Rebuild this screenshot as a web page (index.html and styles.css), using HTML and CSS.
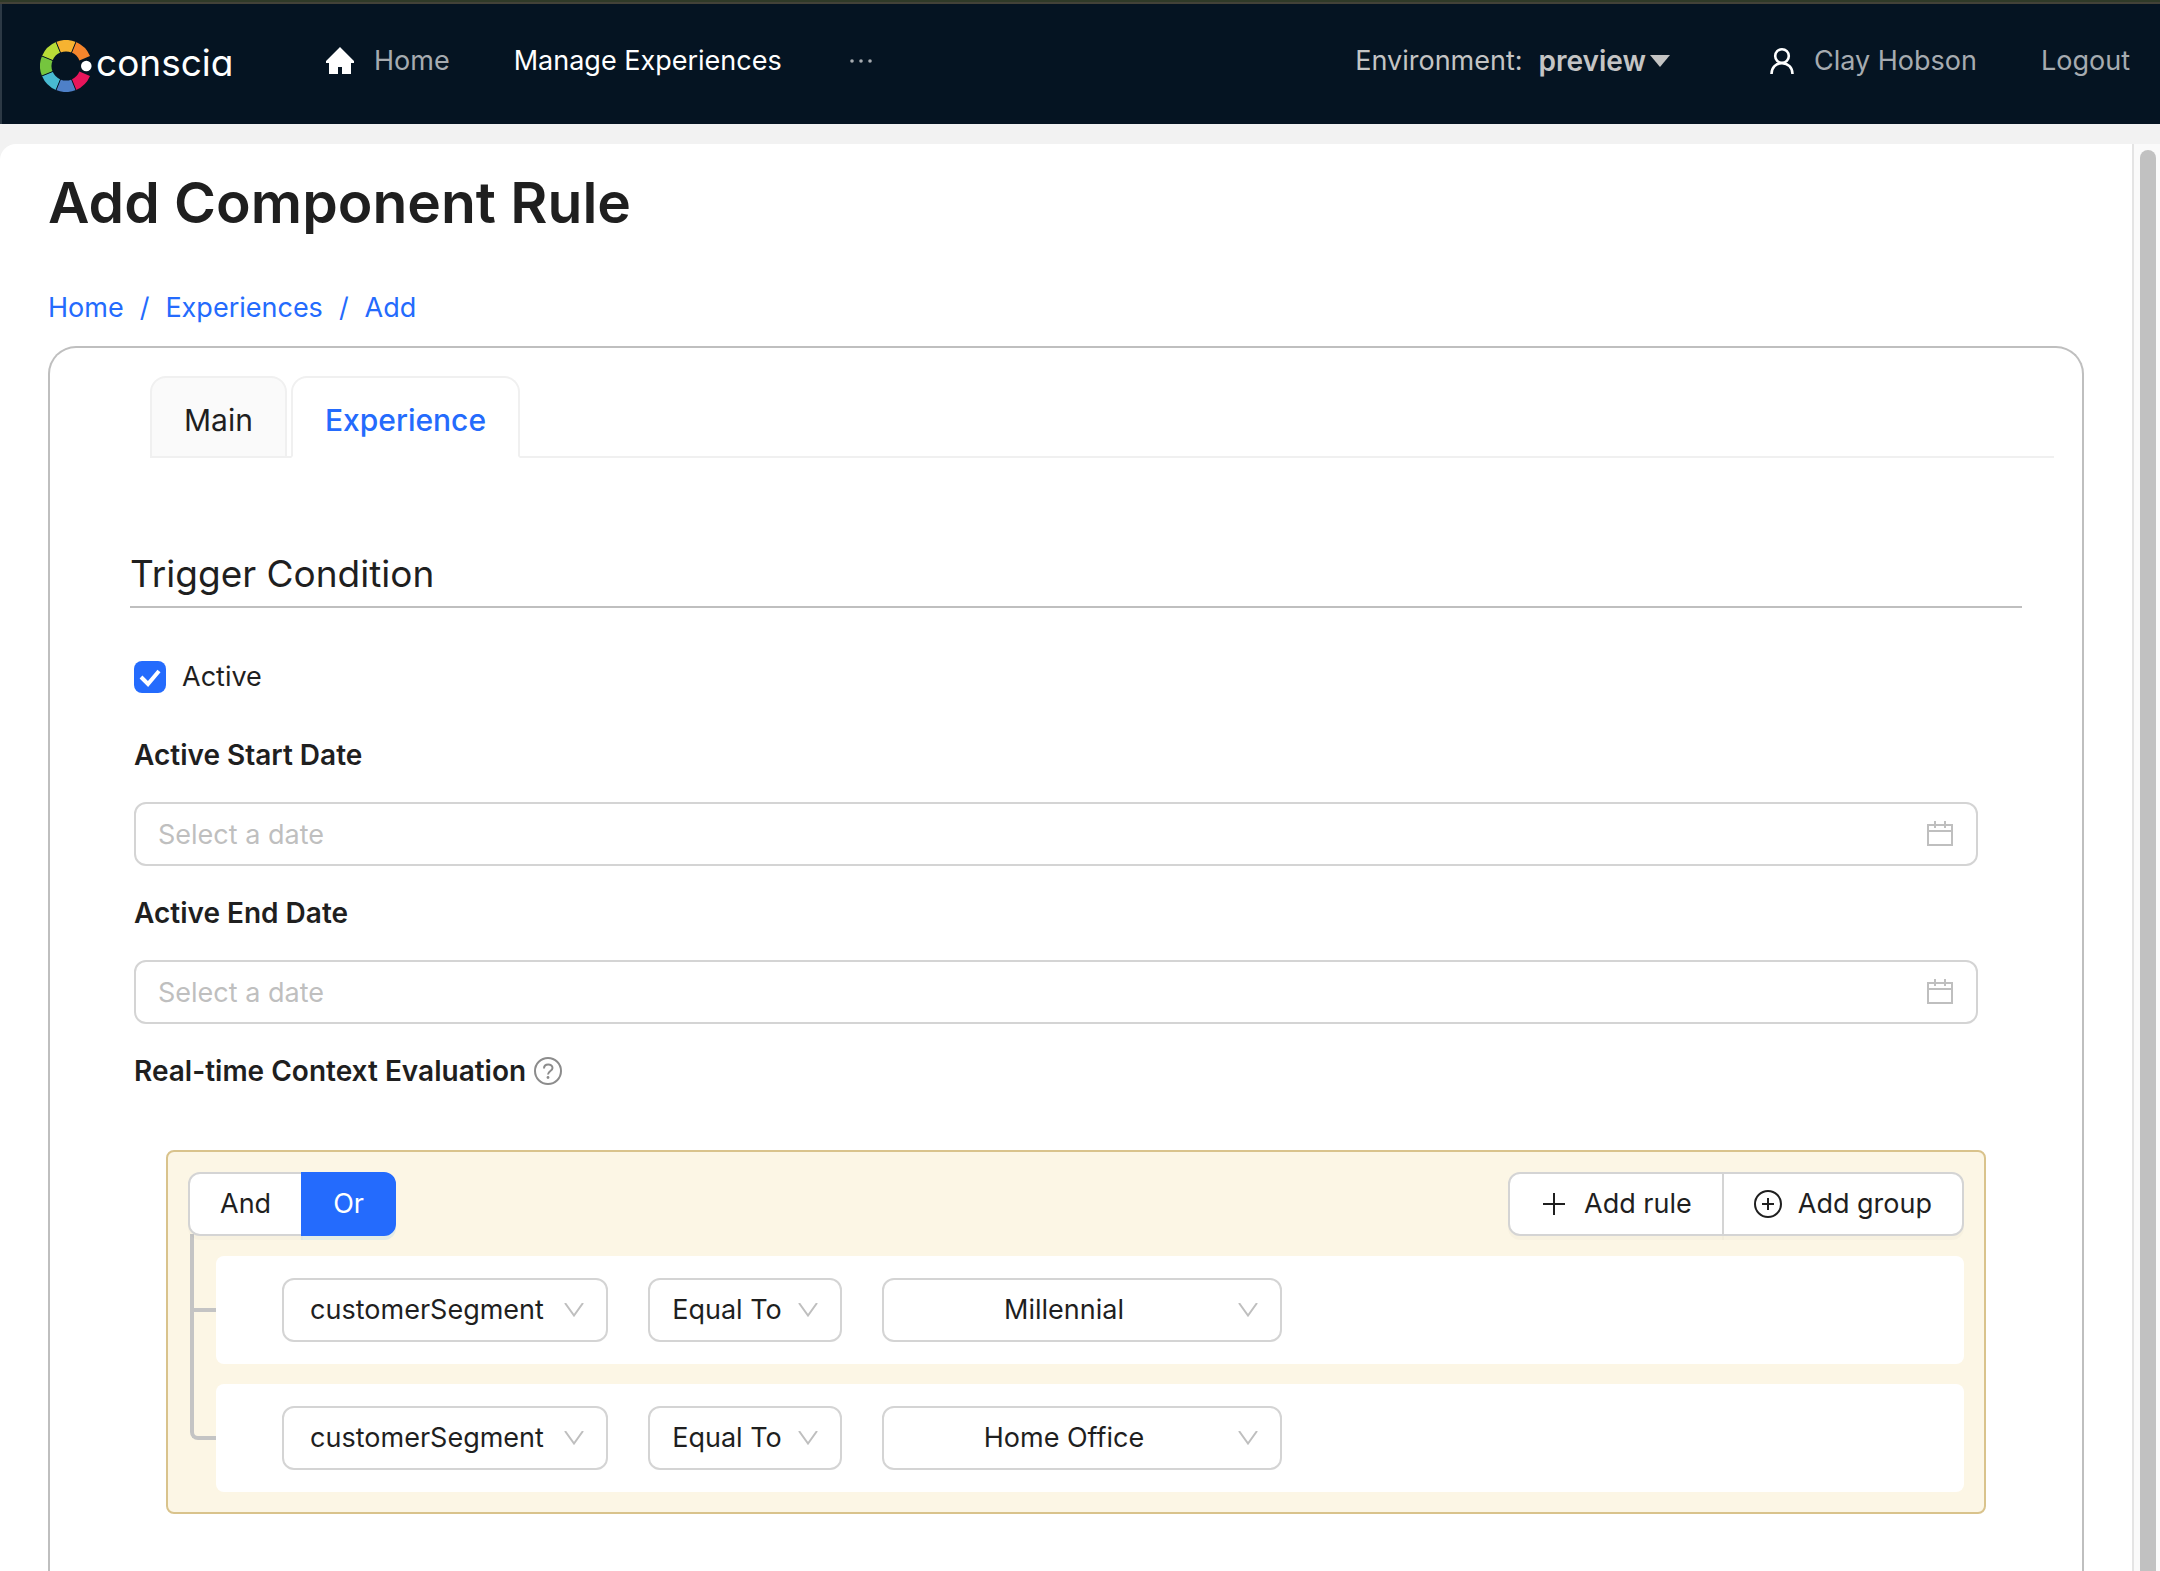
FILE: index.html
```html
<!DOCTYPE html>
<html lang="en">
<head>
<meta charset="utf-8">
<title>Add Component Rule</title>
<meta name="viewport" content="width=device-width, initial-scale=1">
<link rel="stylesheet" href="styles.css">
</head>
<body>
<header class="topbar">
  <a class="brand" href="#">
    <svg class="brand-mark" viewBox="-26 -26 52 52" aria-hidden="true">
      <g fill="none" stroke-width="11.500">
        <path stroke="#f6b331" d="M-7.8-18.7A20.25 20.25 0 0 1 7.8-18.7"/>
        <path stroke="#f5852c" d="M7.8-18.7A20.25 20.25 0 0 1 18.7-7.8"/>
        <path stroke="#b8dc37" d="M-18.7-7.8A20.25 20.25 0 0 1-7.8-18.7"/>
        <path stroke="#75c53e" d="M-18.7 7.8A20.25 20.25 0 0 1-18.7-7.8"/>
        <path stroke="#48bad2" d="M-7.8 18.7A20.25 20.25 0 0 1-18.7 7.8"/>
        <path stroke="#4e80c8" d="M7.8 18.7A20.25 20.25 0 0 1-7.8 18.7"/>
        <path stroke="#e8155b" d="M18.7 7.8A20.25 20.25 0 0 1 7.8 18.7"/>
      </g>
      <path stroke="#051422" d="M-5-12-10.3-25M5-12 10.3-25M-12-5-25-10.3M-12 5-25 10.3M-5 12-10.3 25M5 12 10.3 25"/>
      <circle cx="20.300" r="5.300" fill="#fff"/>
    </svg>
    <span class="brand-name">conscia</span>
  </a>
  <nav class="nav">
    <a class="nav-link" href="#">
      <svg class="icon-home" viewBox="0 0 28 28" aria-hidden="true"><path fill="#fff" d="M14 0 28 14v2h-3v11H16v-7h-4v7H3V16H0v-2z"/></svg>
      Home
    </a>
    <a class="nav-link nav-link-active" href="#">Manage Experiences</a>
    <button class="nav-more" type="button" aria-label="More">
      <svg viewBox="0 0 22 6" width="22" height="6"><g fill="currentColor"><circle cx="2" cy="3" r="1.800"/><circle cx="11" cy="3" r="1.800"/><circle cx="20" cy="3" r="1.800"/></g></svg>
    </button>
  </nav>
  <div class="account">
    <button class="environment" type="button">Environment: <b>preview</b><svg viewBox="0 0 20 12" width="20" height="12" aria-hidden="true"><path fill="currentColor" d="M0 0h20L10 12z"/></svg></button>
    <a class="nav-link" href="#">
      <svg viewBox="0 0 24 28" width="24" height="28" aria-hidden="true"><g fill="none" stroke="#fff" stroke-width="2.600"><circle cx="12" cy="9" r="6.800"/><path d="M1.500 27c0-6.500 4.500-10.800 10.500-10.800S22.500 20.500 22.500 27"/></g></svg>
      Clay Hobson
    </a>
    <a class="nav-link" href="#">Logout</a>
  </div>
</header>
<div class="viewport">
  <main class="page">
    <h1 class="title">Add Component Rule</h1>
    <nav class="breadcrumb" aria-label="Breadcrumb">
      <a href="#">Home</a><span>/</span><a href="#">Experiences</a><span>/</span><a href="#">Add</a>
    </nav>
    <section class="card">
      <div class="tabs" role="tablist">
        <button class="tab" type="button" role="tab" aria-selected="false">Main</button>
        <button class="tab tab-active" type="button" role="tab" aria-selected="true">Experience</button>
      </div>
      <h2 class="section-title">Trigger Condition</h2>
      <form class="form">
        <label class="check"><input type="checkbox" checked> Active</label>
        <label class="label" for="start">Active Start Date</label>
        <div class="date">
          <input id="start" type="text" placeholder="Select a date">
          <svg class="date-icon" viewBox="0 0 26 26" aria-hidden="true"><path fill="none" stroke="#bfbfbf" stroke-width="2" d="M1 4h24v20H1zM1 10h24M8 0v7M18 0v7"/></svg>
        </div>
        <label class="label" for="end">Active End Date</label>
        <div class="date">
          <input id="end" type="text" placeholder="Select a date">
          <svg class="date-icon" viewBox="0 0 26 26" aria-hidden="true"><path fill="none" stroke="#bfbfbf" stroke-width="2" d="M1 4h24v20H1zM1 10h24M8 0v7M18 0v7"/></svg>
        </div>
        <div class="label">Real-time Context Evaluation
          <svg class="help" viewBox="0 0 28 28" role="img" aria-label="Help"><g fill="none" stroke="#8c8c8c" stroke-width="2"><circle cx="14" cy="14" r="13"/><path d="M10 11.500c0-5.500 8.500-5 8.500-.5 0 3-4.500 3-4.500 6.500"/></g><circle cx="14" cy="20.500" r="1.400" fill="#8c8c8c"/></svg>
        </div>
        <div class="group">
          <div class="group-head">
            <div class="buttons">
              <button class="btn" type="button">And</button>
              <button class="btn btn-primary" type="button">Or</button>
            </div>
            <div class="buttons">
              <button class="btn btn-icon" type="button"><svg viewBox="0 0 28 28" width="28" height="28" aria-hidden="true"><path fill="none" stroke="currentColor" stroke-width="2" d="M14 3v22M3 14h22"/></svg>Add rule</button>
              <button class="btn btn-icon" type="button"><svg viewBox="0 0 28 28" width="28" height="28" aria-hidden="true"><g fill="none" stroke="currentColor" stroke-width="2"><circle cx="14" cy="14" r="13"/><path d="M14 8v12M8 14h12"/></g></svg>Add group</button>
            </div>
          </div>
          <ul class="rules">
            <li class="rule">
              <div class="select select-field"><select aria-label="Field"><option>customerSegment</option></select><svg class="chevron" viewBox="0 0 20 14" aria-hidden="true"><path fill="none" stroke="#bfbfbf" stroke-width="2" d="m1 0 9 12.500L19 0"/></svg></div>
              <div class="select select-operator"><select aria-label="Operator"><option>Equal To</option></select><svg class="chevron" viewBox="0 0 20 14" aria-hidden="true"><path fill="none" stroke="#bfbfbf" stroke-width="2" d="m1 0 9 12.500L19 0"/></svg></div>
              <div class="select select-value"><select aria-label="Value"><option>Millennial</option></select><svg class="chevron" viewBox="0 0 20 14" aria-hidden="true"><path fill="none" stroke="#bfbfbf" stroke-width="2" d="m1 0 9 12.500L19 0"/></svg></div>
            </li>
            <li class="rule">
              <div class="select select-field"><select aria-label="Field"><option>customerSegment</option></select><svg class="chevron" viewBox="0 0 20 14" aria-hidden="true"><path fill="none" stroke="#bfbfbf" stroke-width="2" d="m1 0 9 12.500L19 0"/></svg></div>
              <div class="select select-operator"><select aria-label="Operator"><option>Equal To</option></select><svg class="chevron" viewBox="0 0 20 14" aria-hidden="true"><path fill="none" stroke="#bfbfbf" stroke-width="2" d="m1 0 9 12.500L19 0"/></svg></div>
              <div class="select select-value"><select aria-label="Value"><option>Home Office</option></select><svg class="chevron" viewBox="0 0 20 14" aria-hidden="true"><path fill="none" stroke="#bfbfbf" stroke-width="2" d="m1 0 9 12.500L19 0"/></svg></div>
            </li>
          </ul>
        </div>
      </form>
    </section>
  </main>
  <div class="scrollbar" aria-hidden="true"><div class="thumb"></div></div>
</div>
</body>
</html>
```

FILE: styles.css
```css
*, *::before { box-sizing: border-box; }

body {
  margin: 0;
  height: 100vh;
  display: flex;
  flex-direction: column;
  overflow: hidden;
  background: #f2f2f2;
  color: #1f1f1f;
  font: 27px/44px Inter, "Liberation Sans", sans-serif;
}

button, input, select { font: inherit; color: inherit; margin: 0; }
button { cursor: pointer; }
a { text-decoration: none; color: inherit; }
svg { flex: none; }

/* Top bar */
.topbar {
  flex: none;
  height: 124px;
  display: flex;
  align-items: center;
  padding: 0 30px 4px 40px;
  background: #051422;
  border-top: 2px solid #2f3a28;
  box-shadow: inset 0 2px #434238, inset 2px 0 #2c3945;
  color: #a6abb0;
}
.brand { display: flex; align-items: center; width: 286px; padding-top: 10px; color: #fff; }
.brand-mark { width: 52px; height: 52px; }
.brand-name { padding-bottom: 6px; font-size: 37px; margin-left: 4px; font-feature-settings: "cv11"; }
.nav { display: flex; align-items: center; gap: 64px; }
.nav-link { display: flex; align-items: center; gap: 20px; }
.nav-link-active { color: #fff; }
.icon-home { width: 28px; height: 28px; }
.nav-more, .environment { display: flex; align-items: center; border: 0; padding: 0; background: none; }
.nav-more { padding-left: 4px; }
.account { display: flex; align-items: center; gap: 64px; margin-left: auto; }
.environment { color: #c4c4c4; margin-right: 36px; gap: 4px; }
.environment b { font-weight: 600; margin-left: 12px; font-size: 28px; }

/* Scrolling area */
.viewport {
  flex: 1;
  min-height: 0;
  margin-top: 20px;
  display: grid;
  grid-template-columns: 1fr 28px;
  background: #fff;
  border-top-left-radius: 16px;
  overflow: hidden;
}
.page { display: flex; flex-direction: column; min-height: 0; padding: 20px 48px 0; }
.scrollbar { display: flex; padding: 6px 4px 0 6px; background: #fafafa; border-left: 2px solid #e4e4e4; }
.thumb { flex: 1; border-radius: 8px 8px 0 0; background: #c1c1c1; }

.title { margin: 0; font-size: 57px; line-height: 78px; font-weight: 600; }
.breadcrumb { display: flex; gap: 16px; margin-top: 44px; color: #246bfd; }

.card {
  flex: 1;
  margin-top: 16px;
  padding: 28px 28px 0 80px;
  border: 2px solid #bfbfbf;
  border-bottom: 0;
  border-radius: 28px 28px 0 0;
}

/* Tabs */
.tabs { display: flex; gap: 4px; margin-left: 20px; box-shadow: inset 0 -2px #f0f0f0; }
.tab {
  height: 82px;
  padding: 6px 32px 0;
  border: 2px solid #f0f0f0;
  border-radius: 16px 16px 0 0;
  background: #fafafa;
  font-size: 30px;
}
.tab-active { border-bottom-color: #fff; background: #fff; color: #246bfd; font-weight: 500; }

.section-title {
  margin: 88px 32px 0 0;
  padding-bottom: 4px;
  border-bottom: 2px solid #bfbfbf;
  font-size: 37px;
  line-height: 56px;
  font-weight: 400;
}

/* Form */
.form { display: flex; flex-direction: column; margin: 47px 76px 0 4px; }
.check { display: flex; align-items: center; gap: 16px; }
.check input {
  appearance: none;
  width: 32px;
  height: 32px;
  border-radius: 8px;
  background: #246bfd url("data:image/svg+xml,%3Csvg xmlns='http://www.w3.org/2000/svg' viewBox='0 0 32 32'%3E%3Cpath d='M7 16l7 7L25 10' fill='none' stroke='white' stroke-width='4'/%3E%3C/svg%3E");
}
.label { display: flex; align-items: center; gap: 8px; margin: 34px 0 25px; font-size: 28px; font-weight: 600; }
.date + .label { margin-top: 25px; }
.date { position: relative; }
.date input {
  width: 100%;
  height: 64px;
  padding: 0 22px;
  border: 2px solid #d4d4d4;
  border-radius: 12px;
  background: #fff;
}
.date input::placeholder { color: #bfbfbf; opacity: 1; }
.date-icon { position: absolute; right: 25px; top: 19px; width: 26px; height: 26px; }
.help { width: 28px; height: 28px; }

/* Rule group */
.group {
  margin: 32px -8px 0 32px;
  padding: 20px;
  border: 2px solid #d9c38c;
  border-radius: 8px;
  background: #fcf6e5;
}
.group-head { display: flex; justify-content: space-between; }
.buttons { display: flex; position: relative; z-index: 1; }
.btn {
  height: 64px;
  padding: 0 30px;
  border: 2px solid #d4d4d4;
  background: #fff;
  box-shadow: 0 4px rgba(0, 0, 0, .02);
}
.btn + .btn { margin-left: -2px; }
.btn:first-child { border-radius: 12px 0 0 12px; }
.btn:last-child { border-radius: 0 12px 12px 0; }
.btn-primary { border-color: #246bfd; background: #246bfd; color: #fff; box-shadow: 0 4px rgba(5, 145, 255, .1); }
.btn-icon { display: flex; align-items: center; gap: 16px; }

.rules { list-style: none; margin: 20px 0 0; padding: 0 0 0 28px; display: flex; flex-direction: column; gap: 20px; }
.rule {
  position: relative;
  display: flex;
  gap: 40px;
  padding: 22px 66px;
  border-radius: 8px;
  background: #fff;
}
/* Connector from the group's operator to each rule */
.rule::before {
  content: "";
  position: absolute;
  left: -26px;
  top: -22px;
  width: 26px;
  height: 78px;
  border: solid #c4c4c4;
  border-width: 0 0 4px 4px;
}
.rule + .rule::before { top: -76px; height: 132px; border-bottom-left-radius: 8px; }
.select { position: relative; }
.select select {
  appearance: none;
  width: 100%;
  height: 64px;
  padding: 0 56px 0 20px;
  border: 2px solid #d4d4d4;
  border-radius: 12px;
  background: #fff;
  text-align-last: center;
}
.select-field { width: 326px; }
.select-operator { width: 194px; }
.select-value { width: 400px; }
.chevron { position: absolute; right: 24px; top: 25px; width: 20px; height: 14px; }
```
